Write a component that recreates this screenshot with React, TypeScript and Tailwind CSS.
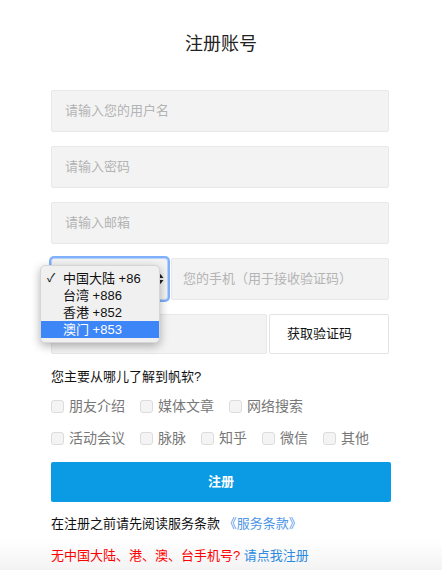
import React from 'react';

const font = { fontFamily: '"Liberation Sans", "Noto Sans CJK SC", sans-serif' };

const row1 = ['朋友介绍', '媒体文章', '网络搜索'];
const row2 = ['活动会议', '脉脉', '知乎', '微信', '其他'];

const areas = [
  { label: '中国大陆 +86', checked: true },
  { label: '台湾 +886' },
  { label: '香港 +852' },
  { label: '澳门 +853', active: true },
];

function Box({ label }: { label: string }) {
  return (
    <label className="flex items-center mr-[15px]">
      <span className="w-[13px] h-[13px] rounded-[3px] border border-[#dcdcdc] bg-[#f4f4f4] mr-[5px]" />
      <span className="text-[14px] leading-[20px] text-[#777]">{label}</span>
    </label>
  );
}

export default function App() {
  return (
    <div
      className="w-[442px] h-[570px] bg-[linear-gradient(to_bottom,#ffffff_540px,#f3f3f3_570px)] overflow-hidden"
      style={font}
    >
      <div className="w-[340px] mx-auto">
        {/* Title */}
        <h2 className="pt-[32px] text-center text-[18px] leading-[24px] text-[#222]">注册账号</h2>

        <div className="mt-[34px] flex flex-col gap-[14px] w-[338px]">
          {['请输入您的用户名', '请输入密码', '请输入邮箱'].map((p) => (
            <div
              key={p}
              className="h-[42px] bg-[#f3f3f3] border border-[#e8e8e8] rounded-[2px] flex items-center pl-[13px] text-[13px] text-[#b4b4b4]"
            >
              {p}
            </div>
          ))}

          {/* Phone row */}
          <div className="relative flex h-[42px] gap-[3px]">
            <div className="w-[117px] h-[42px] rounded-[3px] bg-[#f3f3f3] border border-[#b8d2f8] ring-[2px] ring-[#7fb0fb] flex items-center justify-end pr-[3px]">
              <svg width="7" height="12" viewBox="0 0 7 12">
                <path d="M3.5 1 L6.5 5 H0.5 Z M3.5 11 L6.5 7 H0.5 Z" fill="#222" />
              </svg>
            </div>
            <div className="flex-1 bg-[#f3f3f3] border border-[#e8e8e8] rounded-[2px] flex items-center pl-[11px] text-[13px] text-[#b4b4b4]">
              您的手机（用于接收验证码）
            </div>

            {/* open select list */}
            <div className="absolute left-[-11px] top-[7px] w-[120px] py-[4px] rounded-[5px] bg-[#f0f0f0] shadow-[0_3px_10px_rgba(0,0,0,0.3)] border border-[#d6d6d6] z-10">
              {areas.map((a) => (
                <div
                  key={a.label}
                  className={`relative h-[17px] pl-[22px] text-[13px] leading-[17px] ${
                    a.active ? 'bg-[#3c86f7] text-white' : 'text-[#111]'
                  }`}
                >
                  {a.checked && <span className="absolute left-[6px] top-0 text-[12px]">✓</span>}
                  {a.label}
                </div>
              ))}
            </div>
          </div>

          {/* Code row */}
          <div className="flex h-[40px] gap-[2px]">
            <div className="w-[216px] bg-[#f3f3f3] border border-[#e8e8e8] rounded-[2px] flex items-center pl-[13px] text-[13px] text-[#b4b4b4]">
              请输入验证码
            </div>
            <button className="flex-1 bg-white border border-[#e3e3e3] rounded-[2px] text-[13px] text-[#111] text-left pl-[17px]">
              获取验证码
            </button>
          </div>
        </div>

        {/* Source question */}
        <p className="mt-[14px] text-[13px] leading-[18px] text-[#111]">您主要从哪儿了解到帆软?</p>
        <div className="mt-[10px] flex">
          {row1.map((l) => (
            <Box key={l} label={l} />
          ))}
        </div>
        <div className="mt-[12px] flex">
          {row2.map((l) => (
            <Box key={l} label={l} />
          ))}
        </div>

        <button className="mt-[14px] w-[340px] h-[40px] rounded-[2px] bg-[#0a9be4] text-white text-[13px] font-bold">
          注册
        </button>

        <p className="mt-[13px] text-[13px] leading-[18px] text-[#111]">
          在注册之前请先阅读服务条款 <span className="text-[#4f96e6]">《服务条款》</span>
        </p>
        <p className="mt-[14px] text-[13px] leading-[18px]">
          <span className="text-[#ff0000]">无中国大陆、港、澳、台手机号?</span>
          <span className="text-[#2e8be0]"> 请点我注册</span>
        </p>
      </div>
    </div>
  );
}
